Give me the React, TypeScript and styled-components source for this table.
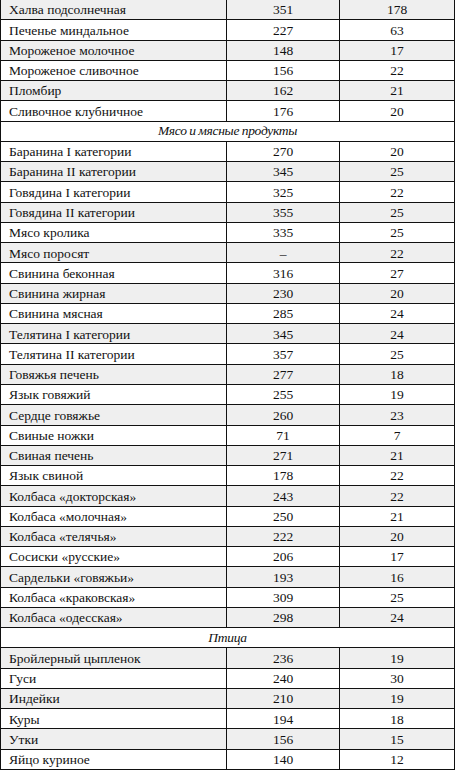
import React from "react";
import styled, { createGlobalStyle } from "styled-components";

const Global = createGlobalStyle`
  html, body { margin: 0; padding: 0; background: #fff; }
  body { font-family: "Liberation Serif", "Times New Roman", "DejaVu Serif", serif; color: #111; }
`;

const Table = styled.div`
  width: 455px;
  height: 770px;
  display: grid;
  grid-template-rows: repeat(38, 1fr);
  box-sizing: border-box;
  border-left: 1px solid #111;
  border-right: 1px solid #111;
  overflow: hidden;
  font-family: "Liberation Serif", "Times New Roman", serif;
  color: #111;
`;

const Row = styled.div<{ $shade: boolean }>`
  display: grid;
  grid-template-columns: 226px 113px 1fr;
  border-bottom: 1px solid #111;
  background: ${(p) => (p.$shade ? "#efefef" : "#ffffff")};
  min-height: 0;
`;

const NameCell = styled.div`
  display: flex;
  align-items: center;
  padding: 1px 0 0 8px;
  font-size: 13.5px;
  line-height: 1;
  white-space: nowrap;
  border-right: 1px solid #111;
`;

const NumCell = styled.div<{ $last?: boolean }>`
  display: flex;
  align-items: center;
  justify-content: center;
  padding-top: 1px;
  font-size: 13.5px;
  line-height: 1;
  border-right: ${(p) => (p.$last ? "none" : "1px solid #111")};
`;

const HeaderRow = styled.div`
  display: flex;
  align-items: center;
  justify-content: center;
  border-bottom: 1px solid #111;
  background: #fff;
  font-style: italic;
  font-size: 13.5px;
  letter-spacing: -0.3px;
  word-spacing: -0.5px;
  white-space: pre;
  min-height: 0;
`;

type Item = { h: string } | { n: string; a: string; b: string };

const data: Item[] = [
  { n: "Халва подсолнечная", a: "351", b: "178" },
  { n: "Печенье миндальное", a: "227", b: "63" },
  { n: "Мороженое молочное", a: "148", b: "17" },
  { n: "Мороженое сливочное", a: "156", b: "22" },
  { n: "Пломбир", a: "162", b: "21" },
  { n: "Сливочное клубничное", a: "176", b: "20" },
  { h: "Мясо и мясные продукты" },
  { n: "Баранина I категории", a: "270", b: "20" },
  { n: "Баранина II категории", a: "345", b: "25" },
  { n: "Говядина I категории", a: "325", b: "22" },
  { n: "Говядина II категории", a: "355", b: "25" },
  { n: "Мясо кролика", a: "335", b: "25" },
  { n: "Мясо поросят", a: "–", b: "22" },
  { n: "Свинина беконная", a: "316", b: "27" },
  { n: "Свинина жирная", a: "230", b: "20" },
  { n: "Свинина мясная", a: "285", b: "24" },
  { n: "Телятина I категории", a: "345", b: "24" },
  { n: "Телятина II категории", a: "357", b: "25" },
  { n: "Говяжья печень", a: "277", b: "18" },
  { n: "Язык говяжий", a: "255", b: "19" },
  { n: "Сердце говяжье", a: "260", b: "23" },
  { n: "Свиные ножки", a: "71", b: "7" },
  { n: "Свиная печень", a: "271", b: "21" },
  { n: "Язык свиной", a: "178", b: "22" },
  { n: "Колбаса «докторская»", a: "243", b: "22" },
  { n: "Колбаса «молочная»", a: "250", b: "21" },
  { n: "Колбаса «телячья»", a: "222", b: "20" },
  { n: "Сосиски «русские»", a: "206", b: "17" },
  { n: "Сардельки «говяжьи»", a: "193", b: "16" },
  { n: "Колбаса «краковская»", a: "309", b: "25" },
  { n: "Колбаса «одесская»", a: "298", b: "24" },
  { h: "Птица" },
  { n: "Бройлерный цыпленок", a: "236", b: "19" },
  { n: "Гуси", a: "240", b: "30" },
  { n: "Индейки", a: "210", b: "19" },
  { n: "Куры", a: "194", b: "18" },
  { n: "Утки", a: "156", b: "15" },
  { n: "Яйцо куриное", a: "140", b: "12" },
];

export default function App() {
  return (
    <>
      <Global />
      <Table>
        {data.map((d, i) =>
          "h" in d ? (
            <HeaderRow key={i}>{d.h}</HeaderRow>
          ) : (
            <Row key={i} $shade={i % 2 === 0}>
              <NameCell>{d.n}</NameCell>
              <NumCell>{d.a}</NumCell>
              <NumCell $last>{d.b}</NumCell>
            </Row>
          )
        )}
      </Table>
    </>
  );
}
